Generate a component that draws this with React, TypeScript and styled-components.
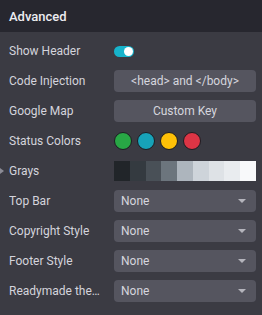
import styled, { createGlobalStyle } from 'styled-components';

const GlobalStyle = createGlobalStyle`
  html, body {
    margin: 0;
    padding: 0;
    background: #3b3b43;
  }
  body {
    font-family: Roboto, "Liberation Sans", sans-serif;
  }
`;

const Panel = styled.div`
  width: 262px;
  height: 315px;
  background: #3b3b43;
  display: flex;
  flex-direction: column;
  overflow: hidden;
`;

const Header = styled.div`
  height: 32px;
  background: #27272f;
  display: flex;
  align-items: center;
  padding: 0 9px;
  box-sizing: border-box;
  font-size: 13px;
  font-weight: 500;
  color: #ececf1;
`;

const Body = styled.div`
  padding: 4px 6px 0 9px;
  display: flex;
  flex-direction: column;
`;

const Row = styled.div`
  position: relative;
  height: 30px;
  display: grid;
  grid-template-columns: 105px 1fr;
  align-items: center;
`;

const Label = styled.div`
  font-size: 12px;
  color: #d4d4dc;
  white-space: nowrap;
  overflow: hidden;
  text-overflow: ellipsis;
  padding-right: 4px;
`;

const Caret = styled.span`
  position: absolute;
  left: -9px;
  top: 12px;
  width: 0;
  height: 0;
  border-top: 3px solid transparent;
  border-bottom: 3px solid transparent;
  border-left: 4px solid #8c8c96;
`;

const Toggle = styled.div`
  width: 20px;
  height: 11px;
  border-radius: 6px;
  background: #17b3cb;
  position: relative;
  &::after {
    content: '';
    position: absolute;
    right: 1px;
    top: 1px;
    width: 9px;
    height: 9px;
    border-radius: 50%;
    background: #ffffff;
  }
`;

const Button = styled.div`
  height: 22px;
  border-radius: 4px;
  background: #55555f;
  color: #d6d6de;
  font-size: 12px;
  display: flex;
  align-items: center;
  justify-content: center;
`;

const Swatches = styled.div`
  display: flex;
  gap: 5px;
`;

const Dot = styled.div<{ $color: string }>`
  width: 18px;
  height: 18px;
  box-sizing: border-box;
  border-radius: 50%;
  border: 1px solid #1c1c22;
  background: ${(p) => p.$color};
`;

const GrayBar = styled.div`
  height: 20px;
  display: grid;
  grid-template-columns: repeat(9, 1fr);
`;

const Gray = styled.div<{ $color: string }>`
  background: ${(p) => p.$color};
`;

const Select = styled.div`
  height: 22px;
  border-radius: 4px;
  background: #55555f;
  color: #d6d6de;
  font-size: 12px;
  display: flex;
  align-items: center;
  justify-content: space-between;
  padding: 0 10px 0 7px;
  box-sizing: border-box;
`;

const Arrow = styled.span`
  width: 0;
  height: 0;
  border-left: 4px solid transparent;
  border-right: 4px solid transparent;
  border-top: 4px solid #b4b4bc;
`;

const statusColors = ['#28a745', '#17a2b8', '#ffc107', '#dc3545'];
const grays = ['#212529', '#343a40', '#495057', '#6c757d', '#adb5bd', '#ced4da', '#dee2e6', '#e9ecef', '#f8f9fa'];
const selects = ['Top Bar', 'Copyright Style', 'Footer Style', 'Readymade themes'];

export default function App() {
  return (
    <>
      <GlobalStyle />
      <Panel>
        <Header>Advanced</Header>
        <Body>
          <Row>
            <Label>Show Header</Label>
            <div>
              <Toggle />
            </div>
          </Row>
          <Row>
            <Label>Code Injection</Label>
            <Button>&lt;head&gt; and &lt;/body&gt;</Button>
          </Row>
          <Row>
            <Label>Google Map</Label>
            <Button>Custom Key</Button>
          </Row>
          <Row>
            <Label>Status Colors</Label>
            <Swatches>
              {statusColors.map((c) => (
                <Dot key={c} $color={c} />
              ))}
            </Swatches>
          </Row>
          <Row>
            <Caret />
            <Label>Grays</Label>
            <GrayBar>
              {grays.map((c) => (
                <Gray key={c} $color={c} />
              ))}
            </GrayBar>
          </Row>
          {selects.map((s) => (
            <Row key={s}>
              <Label>{s}</Label>
              <Select>
                <span>None</span>
                <Arrow />
              </Select>
            </Row>
          ))}
        </Body>
      </Panel>
    </>
  );
}
